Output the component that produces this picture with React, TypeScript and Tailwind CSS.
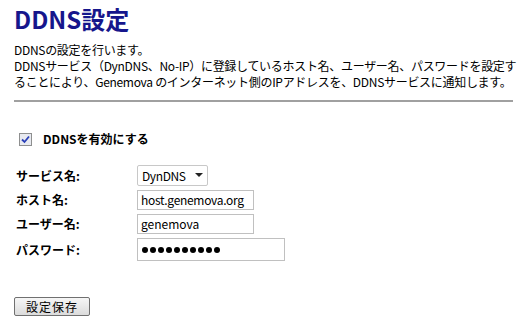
import React from "react";

const font = { fontFamily: '"Noto Sans CJK JP", "Noto Sans", sans-serif' };

export default function App() {
  return (
    <div className="w-[517px] h-[324px] bg-white text-black overflow-hidden" style={font}>
      <div className="pl-[14px] pr-[4px] pt-[4px]">
        <h1 className="text-[24px] leading-[30px] font-bold text-[#16168c]">DDNS設定</h1>
        <div className="mt-[8px] text-[12px] leading-[16px] tracking-[-0.3px] whitespace-nowrap">
          <div>DDNSの設定を行います。</div>
          <div>DDNSサービス（DynDNS、No-IP）に登録しているホスト名、ユーザー名、パスワードを設定す</div>
          <div>ることにより、Genemova のインターネット側のIPアドレスを、DDNSサービスに通知します。</div>
        </div>
        <div className="mt-[10px] h-[2px] bg-[#a0a0a0] w-[499px]" />
        <div className="mt-[28px] ml-[5px] h-[18px] flex items-center gap-[11px]">
          <div className="w-[13px] h-[13px] border border-[#8e8f8f] bg-[#e8eaf0] flex items-center justify-center">
            <svg width="9" height="9" viewBox="0 0 9 9">
              <path d="M1 4.5 L3.5 7 L8 1.5" stroke="#2a3fb8" strokeWidth="1.8" fill="none" />
            </svg>
          </div>
          <span className="text-[12px] font-bold">DDNSを有効にする</span>
        </div>
        <div className="mt-[17px] grid grid-cols-[123px_1fr] gap-y-[4px] text-[12px] items-center">
          <span className="font-bold pl-[2px]">サービス名:</span>
          <div className="w-[71px] h-[21px] border border-[#c8c8c8] rounded-[2px] flex items-center justify-between px-[4px]">
            <span className="tracking-[-0.4px]">DynDNS</span>
            <svg width="8" height="5" viewBox="0 0 8 5"><path d="M0 0 L8 0 L4 4 Z" fill="#222" /></svg>
          </div>
          <span className="font-bold pl-[2px]">ホスト名:</span>
          <div className="w-[117px] h-[20px] border border-[#c0c0c0] flex items-center px-[3px] tracking-[-0.3px]">host.genemova.org</div>
          <span className="font-bold pl-[2px]">ユーザー名:</span>
          <div className="w-[117px] h-[20px] border border-[#c0c0c0] flex items-center px-[3px]">genemova</div>
          <span className="font-bold pl-[2px]">パスワード:</span>
          <div className="w-[148px] h-[23px] border border-[#c0c0c0] flex items-center px-[4px] gap-[2px]">
            {Array.from({ length: 10 }).map((_, i) => (
              <span key={i} className="w-[6px] h-[6px] rounded-full bg-black inline-block" />
            ))}
          </div>
        </div>
        <button className="mt-[36px] w-[76px] h-[19px] border border-[#707070] rounded-[2px] bg-gradient-to-b from-[#f6f6f6] to-[#dcdcdc] text-[12px] leading-none flex items-center justify-center tracking-[1px]">設定保存</button>
      </div>
    </div>
  );
}
